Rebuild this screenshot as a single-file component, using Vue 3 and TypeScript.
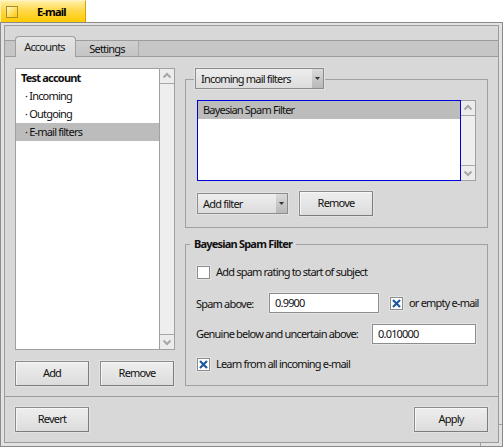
<script setup lang="ts">
const accounts = ['Incoming', 'Outgoing', 'E-mail filters'];
</script>

<template>
  <div class="root">
    <div class="titlebar">
      <div class="ytab">
        <span class="closebox"></span>
        <span class="ytitle">E-mail</span>
      </div>
    </div>
    <div class="win">
      <span class="tick tick-r"></span>
      <span class="tick tick-b"></span>
      <div class="inner">
        <div class="tabs">
          <div class="tabstart"></div>
          <div class="tab active">Accounts</div>
          <div class="tab">Settings</div>
          <div class="tabrest"></div>
        </div>
        <div class="page">
          <div class="left">
            <div class="scrollview leftlist">
              <div class="list plain">
                <div class="row bold">Test account</div>
                <div v-for="(a, i) in accounts" :key="a" class="row sub" :class="{ sel: i === 2 }">· {{ a }}</div>
              </div>
              <div class="vbar">
                <div class="arrow"><svg width="14" height="14" viewBox="0 0 14 14"><path d="M3.500 8.500 7 5l3.500 3.500" fill="none" stroke="#a4a6ac" stroke-width="2" /></svg></div>
                <div class="track"></div>
                <div class="arrow bot"><svg width="14" height="14" viewBox="0 0 14 14"><path d="M3.500 5.500 7 9l3.500-3.500" fill="none" stroke="#a4a6ac" stroke-width="2" /></svg></div>
              </div>
            </div>
            <div class="btnrow">
              <button class="btn">Add</button>
              <button class="btn">Remove</button>
            </div>
          </div>
          <div class="right">
            <div class="group g1">
              <div class="popup legendpop">
                <span class="poplabel">Incoming mail filters</span>
                <span class="popcaret"><svg width="5" height="3" viewBox="0 0 5 3"><path d="M0 0h5L2.500 3z" fill="#333" /></svg></span>
              </div>
              <div class="scrollview filterlist">
                <div class="list focus">
                  <div class="row sel filterrow">Bayesian Spam Filter</div>
                </div>
                <div class="vbar">
                  <div class="arrow"><svg width="14" height="14" viewBox="0 0 14 14"><path d="M3.500 8.500 7 5l3.500 3.500" fill="none" stroke="#a4a6ac" stroke-width="2" /></svg></div>
                  <div class="track"></div>
                  <div class="arrow bot"><svg width="14" height="14" viewBox="0 0 14 14"><path d="M3.500 5.500 7 9l3.500-3.500" fill="none" stroke="#a4a6ac" stroke-width="2" /></svg></div>
                </div>
              </div>
              <div class="filterctl">
                <div class="popup addfilter">
                  <span class="poplabel">Add filter</span>
                  <span class="popcaret"><svg width="5" height="3" viewBox="0 0 5 3"><path d="M0 0h5L2.500 3z" fill="#333" /></svg></span>
                </div>
                <button class="btn">Remove</button>
              </div>
            </div>
            <div class="group g2">
              <div class="legend">Bayesian Spam Filter</div>
              <div class="check">
                <span class="cb"></span>
                <span class="txt">Add spam rating to start of subject</span>
              </div>
              <div class="spamrow">
                <span class="lbl spamlbl">Spam above:</span>
                <div class="input spam">0.9900</div>
                <div class="check">
                  <span class="cb"><svg width="11" height="11" viewBox="0 0 11 11"><path d="M2 2l7 7M9 2 2 9" stroke="#1f5a9e" stroke-width="2.200" fill="none" /></svg></span>
                  <span class="txt">or empty e-mail</span>
                </div>
              </div>
              <div class="genrow">
                <span class="lbl genlbl txt">Genuine below and uncertain above:</span>
                <div class="input gen">0.010000</div>
              </div>
              <div class="check last">
                <span class="cb"><svg width="11" height="11" viewBox="0 0 11 11"><path d="M2 2l7 7M9 2 2 9" stroke="#1f5a9e" stroke-width="2.200" fill="none" /></svg></span>
                <span class="txt">Learn from all incoming e-mail</span>
              </div>
            </div>
          </div>
        </div>
        <div class="footer">
          <button class="btn">Revert</button>
          <button class="btn">Apply</button>
        </div>
      </div>
    </div>
  </div>
</template>

<style>
html, body { margin: 0; padding: 0; background: #fff; }
</style>

<style scoped>
.root {
  width: 503px;
  height: 447px;
  font-family: "Noto Sans", sans-serif;
  font-size: 11px;
  letter-spacing: -0.8px;
  color: #111;
  overflow: hidden;
  display: flex;
  flex-direction: column;
}
.titlebar { height: 22px; display: flex; flex: none; }
.ytab {
  width: 86px;
  box-sizing: border-box;
  background: linear-gradient(#ffefa8, #ffd84a 45%, #ffcb00);
  border-top: 1px solid #fff4c4;
  border-left: 1px solid #fff0b0;
  border-right: 1px solid #d2a400;
  display: flex;
  align-items: center;
  font-weight: 700;
}
.closebox {
  width: 12px;
  height: 12px;
  box-sizing: border-box;
  margin-left: 5px;
  border: 1px solid #a8902c;
  background: linear-gradient(135deg, #fff6c8, #ffc800);
  flex: none;
}
.ytitle { margin-left: 19px; color: #000; }
.win {
  flex: 1;
  position: relative;
  background: #e2e2e2;
  border: 1px solid #8a8a8a;
  padding: 2px 3px 3px;
  box-sizing: border-box;
  display: flex;
}
.tick { position: absolute; background: #a0a0a0; }
.tick-r { right: 0; top: 401px; width: 3px; height: 1px; }
.tick-b { left: 479px; bottom: 0; width: 1px; height: 3px; }
.inner {
  flex: 1;
  background: #d8d8d8;
  border: 1px solid #9c9c9c;
  display: flex;
  flex-direction: column;
  min-width: 0;
}
.tabs {
  display: flex;
  align-items: flex-end;
  margin-top: 10px;
  height: 21px;
  flex: none;
}
.tabstart, .tabrest, .tab {
  height: 17px;
  box-sizing: border-box;
  background: #c6c6c6;
  border-top: 1px solid #9c9c9c;
  border-bottom: 1px solid #9c9c9c;
}
.tabstart { width: 10px; flex: none; }
.tabrest { flex: 1; border-left: 1px solid #aaa; }
.tab {
  width: 62px;
  flex: none;
  background: linear-gradient(#cfcfcf, #c4c4c4);
  text-align: center;
  line-height: 15px;
}
.tab.active {
  height: 21px;
  width: 61px;
  background: linear-gradient(#e4e4e4, #d8d8d8);
  border: 1px solid #a0a0a0;
  border-bottom: 0;
  border-radius: 4px 4px 0 0;
  line-height: 19px;
  color: #222;
  padding-right: 2px;
}
.page {
  height: 340px;
  box-sizing: border-box;
  display: flex;
  gap: 10px;
  padding: 11px 10px 10px;
  flex: none;
  border-bottom: 1px solid #9c9c9c;
}
.left { width: 160px; display: flex; flex-direction: column; flex: none; }
.scrollview { display: flex; box-sizing: border-box; }
.leftlist { flex: 1; min-height: 0; }
.list { flex: 1; background: #fff; min-width: 0; box-sizing: border-box; }
.list.plain { border: 1px solid #a0a0a0; }
.list.focus { border: 1px solid #0000d8; }
.row { height: 18px; line-height: 18px; padding-left: 5px; white-space: nowrap; }
.row.bold { font-weight: 700; }
.row.sub { padding-left: 9px; }
.row.sel { background: #bcbcbc; }
.filterrow { line-height: 17px; }
.vbar {
  width: 15px;
  flex: none;
  box-sizing: border-box;
  display: flex;
  flex-direction: column;
  border: 1px solid #a0a0a0;
  border-left: 0;
  background: #eeeeee;
}
.arrow {
  height: 14px;
  flex: none;
  background: #ececec;
  border-bottom: 1px solid #a8a8a8;
}
.arrow.bot { border-bottom: 0; border-top: 1px solid #a8a8a8; }
.arrow svg { display: block; }
.track { flex: 1; }
.btnrow {
  display: flex;
  justify-content: space-between;
  margin-top: 11px;
  padding-right: 1px;
  flex: none;
}
.btn {
  width: 74px;
  height: 25px;
  flex: none;
  box-sizing: border-box;
  border: 1px solid #8c8c8c;
  border-right-color: #7c7c7c;
  border-bottom-color: #7c7c7c;
  background: linear-gradient(#eeeeee, #dcdcdc);
  box-shadow: inset 1px 1px 0 #f6f6f6;
  font: inherit;
  letter-spacing: inherit;
  color: #111;
  padding: 0 0 2px;
  outline: 1px solid #e2e2e2;
}
.right { flex: 1; display: flex; flex-direction: column; min-width: 0; padding-top: 11px; }
.group {
  border: 1px solid #a0a0a0;
  box-sizing: border-box;
  position: relative;
  flex: none;
}
.g1 { height: 149px; padding: 20px 11px 0; }
.legendpop {
  position: absolute;
  left: 9px;
  top: -12px;
  width: 129px;
}
.popup {
  height: 21px;
  box-sizing: border-box;
  border: 1px solid #8c8c8c;
  background: linear-gradient(#eeeeee, #dcdcdc);
  display: flex;
  align-items: center;
  outline: 1px solid #e2e2e2;
}
.poplabel { flex: 1; padding-left: 5px; white-space: nowrap; }
.popcaret {
  width: 11px;
  align-self: stretch;
  background: linear-gradient(#dadada, #b8b8b8);
  display: flex;
  align-items: center;
  justify-content: center;
  flex: none;
}
.filterlist { height: 81px; width: 279px; }
.filterctl { display: flex; align-items: center; gap: 11px; margin-top: 10px; }
.addfilter { width: 91px; }
.g2 { margin-top: 16px; height: 142px; padding: 21px 11px 0; }
.legend {
  position: absolute;
  left: 4px;
  top: -9px;
  background: #d8d8d8;
  padding: 0 4px;
  font-weight: 700;
  line-height: 16px;
}
.check { display: flex; align-items: center; gap: 6px; white-space: nowrap; height: 13px; }
.txt { padding-bottom: 2px; }
.cb {
  width: 13px;
  height: 13px;
  box-sizing: border-box;
  border: 1px solid #8c8c8c;
  background: #fff;
  outline: 1px solid #e4e4e4;
  flex: none;
  display: flex;
}
.spamrow { display: flex; align-items: center; margin: 14px 0 0 -1px; }
.lbl { white-space: nowrap; flex: none; }
.spamlbl { width: 73px; }
.genlbl { width: 176px; }
.input {
  box-sizing: border-box;
  height: 20px;
  background: #fff;
  border: 1px solid #8c8c8c;
  line-height: 17px;
  padding-left: 5px;
  outline: 1px solid #e4e4e4;
  flex: none;
}
.spam { width: 110px; margin-right: 11px; }
.genrow { display: flex; align-items: center; margin: 11px 0 0 -1px; }
.gen { width: 104px; }
.last { margin-top: 14px; }
.footer {
  display: flex;
  justify-content: space-between;
  padding: 10px 10px 0;
  flex: 1;
}
</style>
